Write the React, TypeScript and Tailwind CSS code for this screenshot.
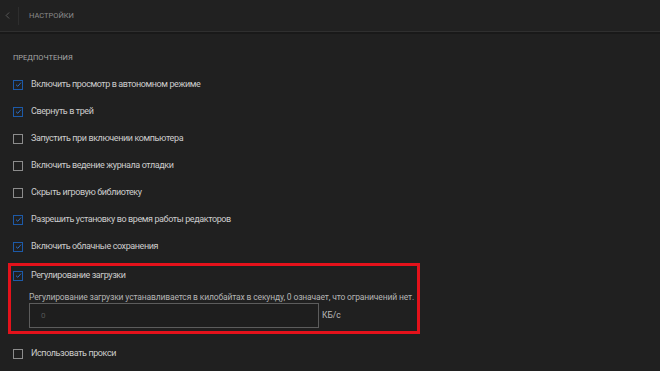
import { ChevronLeft } from "lucide-react";

const options = [
  { label: "Включить просмотр в автономном режиме", checked: true },
  { label: "Свернуть в трей", checked: true },
  { label: "Запустить при включении компьютера", checked: false },
  { label: "Включить ведение журнала отладки", checked: false },
  { label: "Скрыть игровую библиотеку", checked: false },
  { label: "Разрешить установку во время работы редакторов", checked: true },
  { label: "Включить облачные сохранения", checked: true },
];

function Checkbox({ checked }: { checked: boolean }) {
  return (
    <div
      className={
        checked
          ? "w-[10px] h-[10px] border-[1.5px] border-[#1d5aa8] flex items-center justify-center shrink-0"
          : "w-[10px] h-[10px] border-[1.5px] border-[#8c8c8c] shrink-0"
      }
    >
      {checked && (
        <svg width="7" height="7" viewBox="0 0 7 7" fill="none">
          <path d="M1 3.7 L2.8 5.3 L6 1.6" stroke="#2a6cc4" strokeWidth="1" />
        </svg>
      )}
    </div>
  );
}

function Row({ label, checked }: { label: string; checked: boolean }) {
  return (
    <div className="flex items-center h-[27px] gap-[8px]">
      <Checkbox checked={checked} />
      <span className="text-[9px] tracking-[-0.4px] text-[#cccccc]">{label}</span>
    </div>
  );
}

export default function App() {
  return (
    <div
      className="w-[660px] h-[371px] bg-[#202020] overflow-hidden"
      style={{ fontFamily: 'Roboto, "Noto Sans", sans-serif' }}
    >
      <div className="h-[31px] flex items-center bg-[#212121]">
        <ChevronLeft size={11} className="text-[#707070] ml-[2px]" strokeWidth={1.5} />
        <div className="w-px h-[18px] bg-[#2e2e2e] ml-[5px]" />
        <span className="ml-[10px] text-[7.5px] text-[#8a8a8a]">НАСТРОЙКИ</span>
      </div>
      <div className="h-px bg-[#2f2f2f]" />
      <div className="h-[2px] bg-[#191919]" />

      <div className="pl-[13px] pt-[18px]">
        <div className="text-[7.5px] text-[#a8a8a8] h-[12px] leading-[12px]">
          ПРЕДПОЧТЕНИЯ
        </div>
        <div className="mt-[7px] flex flex-col">
          {options.map((o) => (
            <Row key={o.label} label={o.label} checked={o.checked} />
          ))}
        </div>
      </div>

      <div className="ml-[8px] mt-[3px] w-[412px] h-[71px] border-[3px] border-[#e3121b] pl-[2px]">
        <div className="flex items-center h-[19px] gap-[8px]">
          <Checkbox checked={true} />
          <span className="text-[9px] tracking-[-0.4px] text-[#cccccc]">Регулирование загрузки</span>
        </div>
        <div className="pl-[16px] mt-[6px]">
          <div className="text-[8.5px] tracking-[-0.15px] text-[#b4b4b4] leading-[12px] whitespace-nowrap">
            Регулирование загрузки устанавливается в килобайтах в секунду, 0 означает, что ограничений нет.
          </div>
          <div className="flex items-center gap-[3px]">
            <div className="w-[290px] h-[25px] border border-[#5c5c5c] bg-[#1e1e1e] flex items-center pl-[11px]">
              <span className="text-[8px] text-[#555555]">0</span>
            </div>
            <span className="text-[8.5px] text-[#bcbcbc]">КБ/с</span>
          </div>
        </div>
      </div>

      <div className="pl-[13px] mt-[6px]">
        <Row label="Использовать прокси" checked={false} />
      </div>
    </div>
  );
}
